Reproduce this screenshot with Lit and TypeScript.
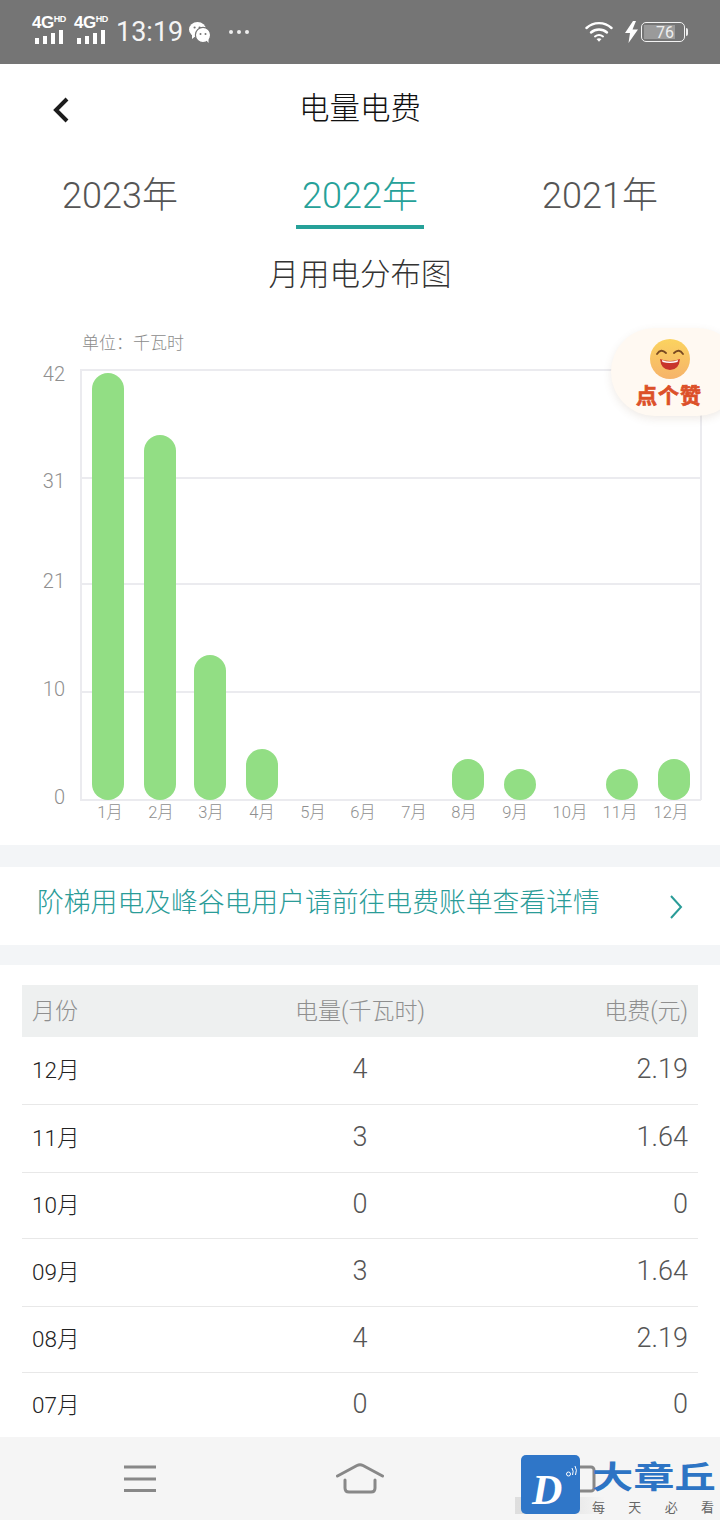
import { LitElement, html, css, svg } from "lit";
import { customElement } from "lit/decorators.js";

const ySvg = 328; // page y of the chart's top edge

const grid = [
  { y: 370, label: "42", ty: 381 },
  { y: 478, label: "31", ty: 488 },
  { y: 584, label: "21", ty: 588 },
  { y: 692, label: "10", ty: 696 },
  { y: 800, label: "0", ty: 804 },
];
const bars: [number, number][] = [
  [92, 373], [144, 435], [194, 655], [246, 749], [452, 759], [504, 769], [606, 769], [658, 759],
];
const months: [string, number][] = [
  ["1月", 110], ["2月", 161], ["3月", 211], ["4月", 262], ["5月", 313], ["6月", 363],
  ["7月", 414], ["8月", 464], ["9月", 515], ["10月", 570], ["11月", 620], ["12月", 671],
];
const rows = [
  { m: "12月", kwh: "4", fee: "2.19", h: 68 },
  { m: "11月", kwh: "3", fee: "1.64", h: 68 },
  { m: "10月", kwh: "0", fee: "0", h: 66 },
  { m: "09月", kwh: "3", fee: "1.64", h: 68 },
  { m: "08月", kwh: "4", fee: "2.19", h: 66 },
  { m: "07月", kwh: "0", fee: "0", h: 66 },
];

const signal = html`<span class="sig">
  <span class="sig-t">4G<sup>HD</sup></span>
  <svg width="32" height="14" viewBox="0 0 32 14"><g fill="#fff">
    <rect x="3" y="8" width="4" height="6"/><rect x="11" y="6" width="4" height="8"/>
    <rect x="19" y="3" width="4" height="11"/><rect x="27" y="0" width="4" height="14"/></g></svg>
</span>`;

@customElement("app-root")
export class AppRoot extends LitElement {
  static styles = css`
    :host { display: block; width: 720px; height: 1520px; overflow: hidden; position: relative; background: #fff;
      font-family: Roboto, "Noto Sans CJK SC", sans-serif; }
    .page { height: 1520px; display: flex; flex-direction: column; }
    .status { height: 64px; flex: none; background: #757575; color: #fff; display: flex; align-items: center;
      padding: 0 32px; box-sizing: border-box; justify-content: space-between; }
    .st-left, .st-right { display: flex; align-items: center; }
    .st-left { gap: 9px; }
    .sig { display: flex; flex-direction: column; width: 33px; margin-top: -4px; }
    .sig-t { font: 700 17px/14px "Liberation Sans", sans-serif; white-space: nowrap; letter-spacing: -0.5px; }
    .sig-t sup { font-size: 9px; line-height: 0; vertical-align: 6px; letter-spacing: -0.4px; }
    .time { font-size: 27px; font-weight: 400; line-height: 1; color: #f4f4f4; }
    .wx { margin-left: -3px; }
    .dots { margin-left: 8px; }
    .st-right { gap: 12px; }
    .batt-wrap { display: flex; align-items: center; }
    .bolt { margin-right: 3px; }
    .batt { width: 44px; height: 20px; border: 1.5px solid #f2f2f2; border-radius: 5px; box-sizing: border-box;
      padding: 2px; display: flex; }
    .batt-fill { width: 31px; background: #9a9a9a; font-size: 16px; line-height: 15px; text-align: right;
      padding-right: 1px; box-sizing: border-box; color: #eee; }
    .batt-cap { width: 2px; height: 8px; background: #eee; border-radius: 0 2px 2px 0; margin-left: 1px; }
    .head { height: 86px; flex: none; display: grid; grid-template-columns: 1fr auto 1fr; align-items: center; }
    .back { padding-left: 52px; display: flex; margin-top: 6px; }
    .title { font-size: 30.5px; color: #111; font-weight: 300; line-height: 1; margin-top: 4px; }
    .tabs { display: grid; grid-template-columns: repeat(3, 1fr); height: 79px; flex: none; }
    .tab { display: flex; flex-direction: column; align-items: center; color: #555; font-size: 36px; font-weight: 300; }
    .tab span { line-height: 46px; padding: 23px 6px 0; height: 75px; box-sizing: border-box; }
    .tab.on span { color: #26a199; border-bottom: 4px solid #26a199; height: 79px; }
    .chart-title { text-align: center; font-size: 30.5px; color: #333; line-height: 40px; margin-top: 26px; font-weight: 300; height: 40px; flex: none; }
    .chart { display: block; flex: none; margin-top: 13px; }
    .chart text { font-family: Roboto, "Noto Sans CJK SC", sans-serif; font-weight: 300; }
    .band { height: 22px; background: #f3f5f7; flex: none; }
    .band.b2 { height: 20px; }
    .link { height: 78px; flex: none; display: flex; align-items: center; justify-content: space-between;
      padding: 0 36px 0 37px; color: #2a9c98; font-size: 26.8px; box-sizing: border-box; font-weight: 300; }
    .link span { margin-top: -12px; }
    .link svg { margin-top: 1px; }
    .table { flex: 1; min-height: 0; padding: 20px 22px 0; overflow: hidden; }
    .row { display: grid; grid-template-columns: 1fr 1fr 1fr; align-items: center; padding: 0 10px; box-sizing: border-box; }
    .row > :nth-child(2) { text-align: center; }
    .row > :nth-child(3) { text-align: right; }
    .row.th { height: 52px; background: #eef0f0; color: #8f8f8f; font-size: 23px; font-weight: 300; padding-bottom: 4px; }
    .row.td { border-bottom: 1.5px solid #e8e8e8; color: #555; font-size: 27px; font-weight: 300; padding-bottom: 4px; }
    .row.td:last-child { border-bottom: 0; }
    .row.td .m { font-size: 22.5px; color: #222; font-weight: 300; margin-bottom: 2px; }
    .nav { height: 83px; flex: none; background: #f5f5f5; display: grid; grid-template-columns: repeat(3, 220px);
      padding: 0 30px; align-items: center; justify-items: center; box-sizing: border-box; }
    .like { position: absolute; left: 611px; top: 328px; width: 130px; height: 88px; border-radius: 44px;
      background: #fff9f2; box-shadow: 0 3px 8px rgba(120, 90, 60, 0.12); display: flex; flex-direction: column; align-items: flex-start; }
    .like svg { margin: 10px 0 0 38px; }
    .like-t { font: 700 21px/24px "Noto Sans CJK SC", sans-serif; color: #dc5029; margin: 2px 0 0 25px; letter-spacing: 1px;
      white-space: nowrap; -webkit-text-stroke: 0.7px #dc5029; }
    .wm { position: absolute; left: 515px; top: 1455px; width: 205px; height: 62px; display: flex; }
    .wm-shade { position: absolute; left: 0; top: 42px; width: 90px; height: 17px; background: linear-gradient(90deg, rgba(120,120,120,.18), rgba(120,120,120,.2) 30%, rgba(120,120,120,0)); }
    .wm-logo { position: absolute; left: 6px; top: 0; width: 59px; height: 59px; background: #2f76c8; border-radius: 5px; }
    .wm-d { position: absolute; left: 11px; top: 14px; font: italic 700 42px/42px "Liberation Serif", serif; color: #fff; }
    .wm-dot { position: absolute; left: 45px; top: 10px; }
    .wm-text { position: absolute; left: 77px; top: 0; width: 124px; }
    .wm-big { font: 700 31px/36px "Noto Sans CJK SC", sans-serif; color: #2d74c4; white-space: nowrap;
      transform: scaleX(1.33); transform-origin: left center; margin-top: 2px; width: 93px; }
    .wm-small { display: flex; justify-content: space-between; font: 400 13px/16px "Noto Sans CJK SC", sans-serif; color: #666; margin-top: 6px; padding-right: 2px; }
  `;

  render() {
    return html`<div class="page">
      <div class="status">
        <div class="st-left">
          ${signal}${signal}
          <span class="time">13:19</span>
          <svg class="wx" width="22" height="22" viewBox="0 0 22 22" fill="#fff">
            <ellipse cx="8.5" cy="8.5" rx="8.5" ry="7.5"/>
            <path d="M3 13 L3 18 L8 14Z"/>
            <circle cx="14" cy="14" r="7.6" stroke="#757575" stroke-width="1.2"/>
            <path d="M17 19 L19.5 22 L19.5 17Z"/>
            <circle cx="5.6" cy="6.5" r="1.1" fill="#757575"/><circle cx="10.6" cy="6.5" r="1.1" fill="#757575"/>
            <circle cx="11.5" cy="13" r="1" fill="#757575"/><circle cx="16.5" cy="13" r="1" fill="#757575"/>
          </svg>
          <svg class="dots" width="22" height="6" viewBox="0 0 22 6" fill="#eee"><circle cx="3" cy="3" r="2"/><circle cx="11" cy="3" r="2"/><circle cx="19" cy="3" r="2"/></svg>
        </div>
        <div class="st-right">
          <svg width="28" height="22" viewBox="0 0 28 22" fill="none" stroke="#fff" stroke-width="2.4" stroke-linecap="round">
            <path d="M1.5 7 C8.5 0.5 19.5 0.5 26.5 7"/><path d="M6 11.5 C10.5 7.5 17.5 7.5 22 11.5"/>
            <path d="M10 15.5 C12.5 13.6 15.5 13.6 18 15.5" stroke-width="2"/>
            <path d="M11.5 18 L14 20.8 L16.5 18 Q14 16.5 11.5 18Z" fill="#fff" stroke="none"/>
          </svg>
          <div class="batt-wrap">
            <svg class="bolt" width="13" height="22" viewBox="0 0 13 22" fill="#fff"><path d="M8 0 L0 12 L5 12 L3.5 22 L13 8.5 L7.5 8.5 L11 0Z"/></svg>
            <div class="batt"><div class="batt-fill">76</div></div>
            <div class="batt-cap"></div>
          </div>
        </div>
      </div>

      <div class="head">
        <div class="back"><svg width="20" height="28" viewBox="0 0 20 28" fill="none" stroke="#1c1c1c" stroke-width="4"><path d="M15 3 L4 14 L15 25"/></svg></div>
        <div class="title">电量电费</div>
        <div></div>
      </div>

      <div class="tabs">
        <div class="tab"><span>2023年</span></div>
        <div class="tab on"><span>2022年</span></div>
        <div class="tab"><span>2021年</span></div>
      </div>

      <div class="chart-title">月用电分布图</div>

      <svg class="chart" width="720" height="537" viewBox="0 ${ySvg - 20} 720 537">
        <text x="82" y="349" font-size="17" fill="#8c8c8c">单位：千瓦时</text>
        ${grid.map((g) => svg`
          <line x1="80" x2="701" y1="${g.y}" y2="${g.y}" stroke="#ebebef" stroke-width="2"/>
          <text x="65" y="${g.ty}" text-anchor="end" font-size="20" fill="#8f8f8f">${g.label}</text>`)}
        <line x1="81" x2="81" y1="370" y2="800" stroke="#ebebef" stroke-width="2"/>
        <line x1="701" x2="701" y1="370" y2="800" stroke="#ebebef" stroke-width="2"/>
        ${bars.map(([x, top]) => svg`<rect x="${x}" y="${top}" width="32" height="${800 - top}" rx="16" fill="#92de84"/>`)}
        ${months.map(([t, x]) => svg`<text x="${x}" y="818" text-anchor="middle" font-size="16.5" fill="#8f8f8f">${t}</text>`)}
      </svg>

      <div class="band"></div>
      <div class="link">
        <span>阶梯用电及峰谷电用户请前往电费账单查看详情</span>
        <svg width="16" height="26" viewBox="0 0 16 26" fill="none" stroke="#2a9c98" stroke-width="2"><path d="M3 2 L13 13 L3 24"/></svg>
      </div>
      <div class="band b2"></div>

      <div class="table">
        <div class="row th"><div>月份</div><div>电量(千瓦时)</div><div>电费(元)</div></div>
        ${rows.map((r) => html`<div class="row td" style="height:${r.h}px">
          <div class="m">${r.m}</div><div>${r.kwh}</div><div>${r.fee}</div></div>`)}
      </div>

      <div class="nav">
        <svg width="34" height="28" viewBox="0 0 34 28" fill="none" stroke="#888" stroke-width="3.2"><path d="M1 2 H33 M1 14 H33 M1 25.5 H33"/></svg>
        <svg width="48" height="32" viewBox="0 0 48 32" fill="none" stroke="#888" stroke-width="3" stroke-linecap="round" stroke-linejoin="round">
          <path d="M1.5 13 L21 2.5 Q24 1 27 2.5 L46.5 13"/><path d="M9 17 V25 Q9 29 13 29 H35 Q39 29 39 25 V17"/>
        </svg>
        <svg width="32" height="28" viewBox="0 0 32 28" fill="none" stroke="#888" stroke-width="3"><rect x="2" y="2" width="28" height="24" rx="3"/></svg>
      </div>

      <div class="like">
        <svg width="42" height="42" viewBox="0 0 42 42">
          <defs><linearGradient id="fc" x1="0" y1="0" x2="0" y2="1"><stop offset="0" stop-color="#fbd35f"/><stop offset="1" stop-color="#f6b36a"/></linearGradient></defs>
          <circle cx="21" cy="21" r="20" fill="url(#fc)"/>
          <path d="M8 16 Q12 10 17 15 M25 15 Q30 10 34 16" fill="none" stroke="#7a4a22" stroke-width="1.8" stroke-linecap="round"/>
          <path d="M11 21 Q21 25 31 21 Q30 32 21 32 Q12 32 11 21Z" fill="#c8342c"/>
          <path d="M13 22 Q21 25 29 22 L28.5 24 Q21 26 13.5 24Z" fill="#fff"/>
        </svg>
        <div class="like-t">点个赞</div>
      </div>

      <div class="wm">
        <div class="wm-shade"></div>
        <div class="wm-logo">
          <span class="wm-d">D</span>
          <svg class="wm-dot" width="12" height="14" viewBox="0 0 12 14" fill="none" stroke="#fff" stroke-width="1"><circle cx="2.5" cy="9" r="2"/><path d="M6 3 Q8 6 6.5 10 M9 1 Q11.5 5 9.5 10"/></svg>
        </div>
        <div class="wm-text">
          <div class="wm-big">大章丘</div>
          <div class="wm-small"><span>每</span><span>天</span><span>必</span><span>看</span></div>
        </div>
      </div>
    </div>`;
  }
}
